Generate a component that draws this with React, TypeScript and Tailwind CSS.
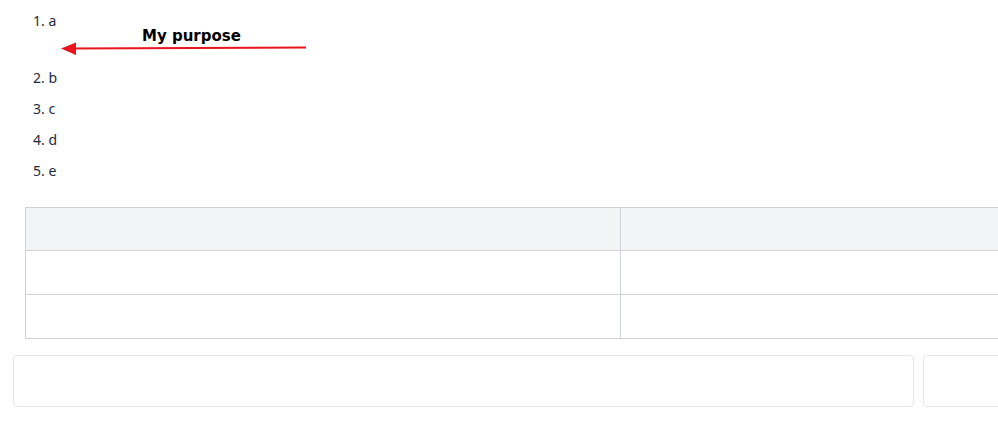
import React from "react";

const items = ["b", "c", "d", "e"];

export default function App() {
  return (
    <div className="w-[998px] h-[426px] overflow-hidden bg-white relative" style={{ fontFamily: "'Noto Sans', 'Open Sans', sans-serif" }}>
      <div className="pt-[5px] pl-[33px] text-[14px] text-[#1f2a3a]">
        <div className="h-[31px] flex items-center">1. a</div>
        <div className="-mt-[11px] mb-[5px] ml-[25px] w-[252px]">
          <div className="h-[18px] mt-[2px] pl-[84px] text-[15px] leading-[18px] font-bold text-black" style={{ fontFamily: "'DejaVu Sans', Verdana, sans-serif" }}>
            My purpose
          </div>
          <svg width="252" height="16" viewBox="0 0 252 16" className="block -mt-[4px]">
            <line x1="12" y1="7.5" x2="248" y2="6.5" stroke="#e8141e" strokeWidth="2" />
            <polygon points="3,7.5 18,1.5 18,14" fill="#e8141e" />
          </svg>
        </div>
        {items.map((c, i) => (
          <div key={c} className="h-[31px] flex items-center">
            {i + 2}. {c}
          </div>
        ))}
      </div>
      <div className="mt-[21px] ml-[25px] w-[1200px] border border-[#cfd3d8]">
        <div className="flex h-[43px] bg-[#f3f4f6] border-b border-[#cfd3d8]">
          <div className="w-[595px] border-r border-[#cfd3d8]" />
          <div className="flex-1" />
        </div>
        <div className="flex h-[44px] border-b border-[#cfd3d8]">
          <div className="w-[595px] border-r border-[#cfd3d8]" />
          <div className="flex-1" />
        </div>
        <div className="flex h-[43px]">
          <div className="w-[595px] border-r border-[#cfd3d8]" />
          <div className="flex-1" />
        </div>
      </div>
      <div className="mt-[16px] ml-[13px] flex gap-[9px]">
        <div className="w-[901px] h-[52px] shrink-0 rounded-[4px] border border-[#e5e7eb]" />
        <div className="w-[300px] h-[52px] shrink-0 rounded-[4px] border border-[#e5e7eb]" />
      </div>
    </div>
  );
}
